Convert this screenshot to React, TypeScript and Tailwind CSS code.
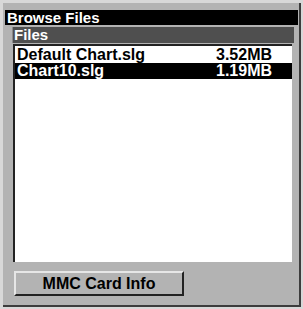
import React from "react";

const font = { fontFamily: '"Liberation Sans", Arial, sans-serif' };

export default function App() {
  return (
    <div className="w-[303px] h-[309px] bg-[#d8d8d8] pt-[3px] pl-[3px]" style={font}>
      <div className="w-[298px] h-[304px] bg-[#b3b3b3] border-r-[2px] border-b-[2px] border-[#3c3c3c] flex flex-col">
        <div className="ml-[2px] mt-[7px] w-[293px] h-[15px] bg-black text-white font-bold text-[15px] leading-[15px] pl-[2px] flex items-center">
          Browse Files
        </div>
        <div className="ml-[9px] mt-[2px] w-[282px] h-[16px] bg-[#4f4f4f] border-l border-[#8a8a8a] text-white font-bold text-[15px] leading-[16px] pl-[1px]">
          Files
        </div>
        <div className="ml-[10px] mt-[1px] w-[279px] h-[218px] bg-white border-l-[2px] border-t-[2px] border-[#222] pt-[1px]">
          <div className="flex h-[16px] items-center text-black font-bold text-[16px] leading-[16px] pl-[2px] pr-[12px]">
            <span className="flex-1">Default Chart.slg</span>
            <span className="w-[64px]">3.52MB</span>
          </div>
          <div className="flex h-[16px] items-center bg-black text-white font-bold text-[16px] leading-[16px] pl-[2px] pr-[12px]">
            <span className="flex-1">Chart10.slg</span>
            <span className="w-[64px]">1.19MB</span>
          </div>
        </div>
        <div className="ml-[11px] mt-[9px] w-[170px] h-[25px] bg-[#b3b3b3] border-t-[2px] border-l-[2px] border-[#e6e6e6] border-r-[2px] border-b-[2px] border-r-[#222] border-b-[#222] flex items-center justify-center text-black font-bold text-[16px] leading-[16px]">
          MMC Card Info
        </div>
      </div>
    </div>
  );
}
